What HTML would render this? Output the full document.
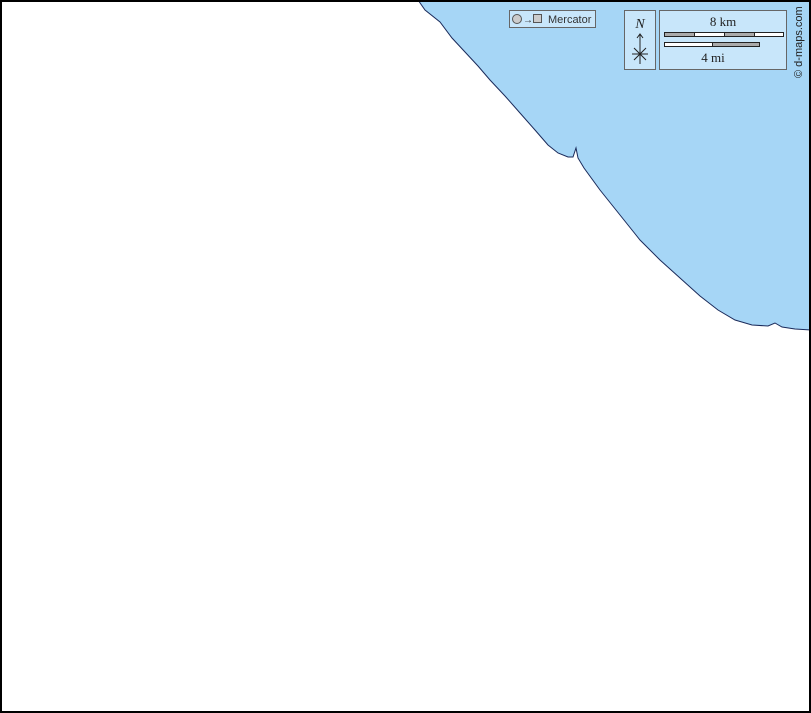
<!DOCTYPE html>
<html><head><style>
body{margin:0;width:811px;height:713px;overflow:hidden;background:#fff}
</style></head><body>
<svg width="811" height="713" xmlns="http://www.w3.org/2000/svg" style="display:block">
<rect width="811" height="713" fill="#fff"/>
<path d="M418,0 L425,10 L440,22 L452,38 L465,52 L478,66 L490,80 L505,96 L520,113 L535,130 L548,145 L558,153 L568,157 L573,157 L576,148 L578,158 L584,168 L600,190 L620,215 L640,240 L660,260 L680,278 L700,296 L718,310 L735,320 L752,325 L768,326 L775,323 L782,327 L795,329 L811,330 L811,0 Z" fill="#a6d6f6" stroke="#1a2a5a" stroke-width="1"/>
<rect x="509.5" y="10.5" width="86" height="17" fill="#c8e6fa" stroke="#666"/>
<circle cx="517" cy="19" r="4.5" fill="#ccc" stroke="#555"/>
<text x="523" y="23" font-family="Liberation Sans,sans-serif" font-size="10" fill="#333">→</text>
<rect x="533.5" y="14.5" width="8" height="8" fill="#ccc" stroke="#555"/>
<text x="548" y="23" font-family="Liberation Sans,sans-serif" font-size="11" fill="#333">Mercator</text>
<rect x="624.5" y="10.5" width="31" height="59" fill="#c8e6fa" stroke="#666"/>
<text x="640" y="28" text-anchor="middle" font-family="Liberation Serif,serif" font-style="italic" font-size="14" fill="#222">N</text>
<path d="M640,34 L640,64 M637,38 L640,34 L643,38 M632,54 L648,54 M634,48 L646,60 M646,48 L634,60" stroke="#222" stroke-width="1" fill="none"/>
<rect x="659.5" y="10.5" width="127" height="59" fill="#c8e6fa" stroke="#666"/>
<text x="723" y="26" text-anchor="middle" font-family="Liberation Serif,serif" font-size="13" fill="#222">8 km</text>
<rect x="664.5" y="32.5" width="119" height="4" fill="#fff" stroke="#222"/>
<rect x="664.5" y="32.5" width="30" height="4" fill="#aaa" stroke="#222"/>
<rect x="724.5" y="32.5" width="30" height="4" fill="#aaa" stroke="#222"/>
<rect x="664.5" y="42.5" width="95" height="4" fill="#aaa" stroke="#222"/>
<rect x="664.5" y="42.5" width="48" height="4" fill="#fff" stroke="#222"/>
<text x="713" y="62" text-anchor="middle" font-family="Liberation Serif,serif" font-size="13" fill="#222">4 mi</text>
<text transform="translate(802,78) rotate(-90)" font-family="Liberation Sans,sans-serif" font-size="11" fill="#222">© d-maps.com</text>
<rect x="1" y="1" width="809" height="711" fill="none" stroke="#000" stroke-width="2"/>
</svg>
</body></html>
